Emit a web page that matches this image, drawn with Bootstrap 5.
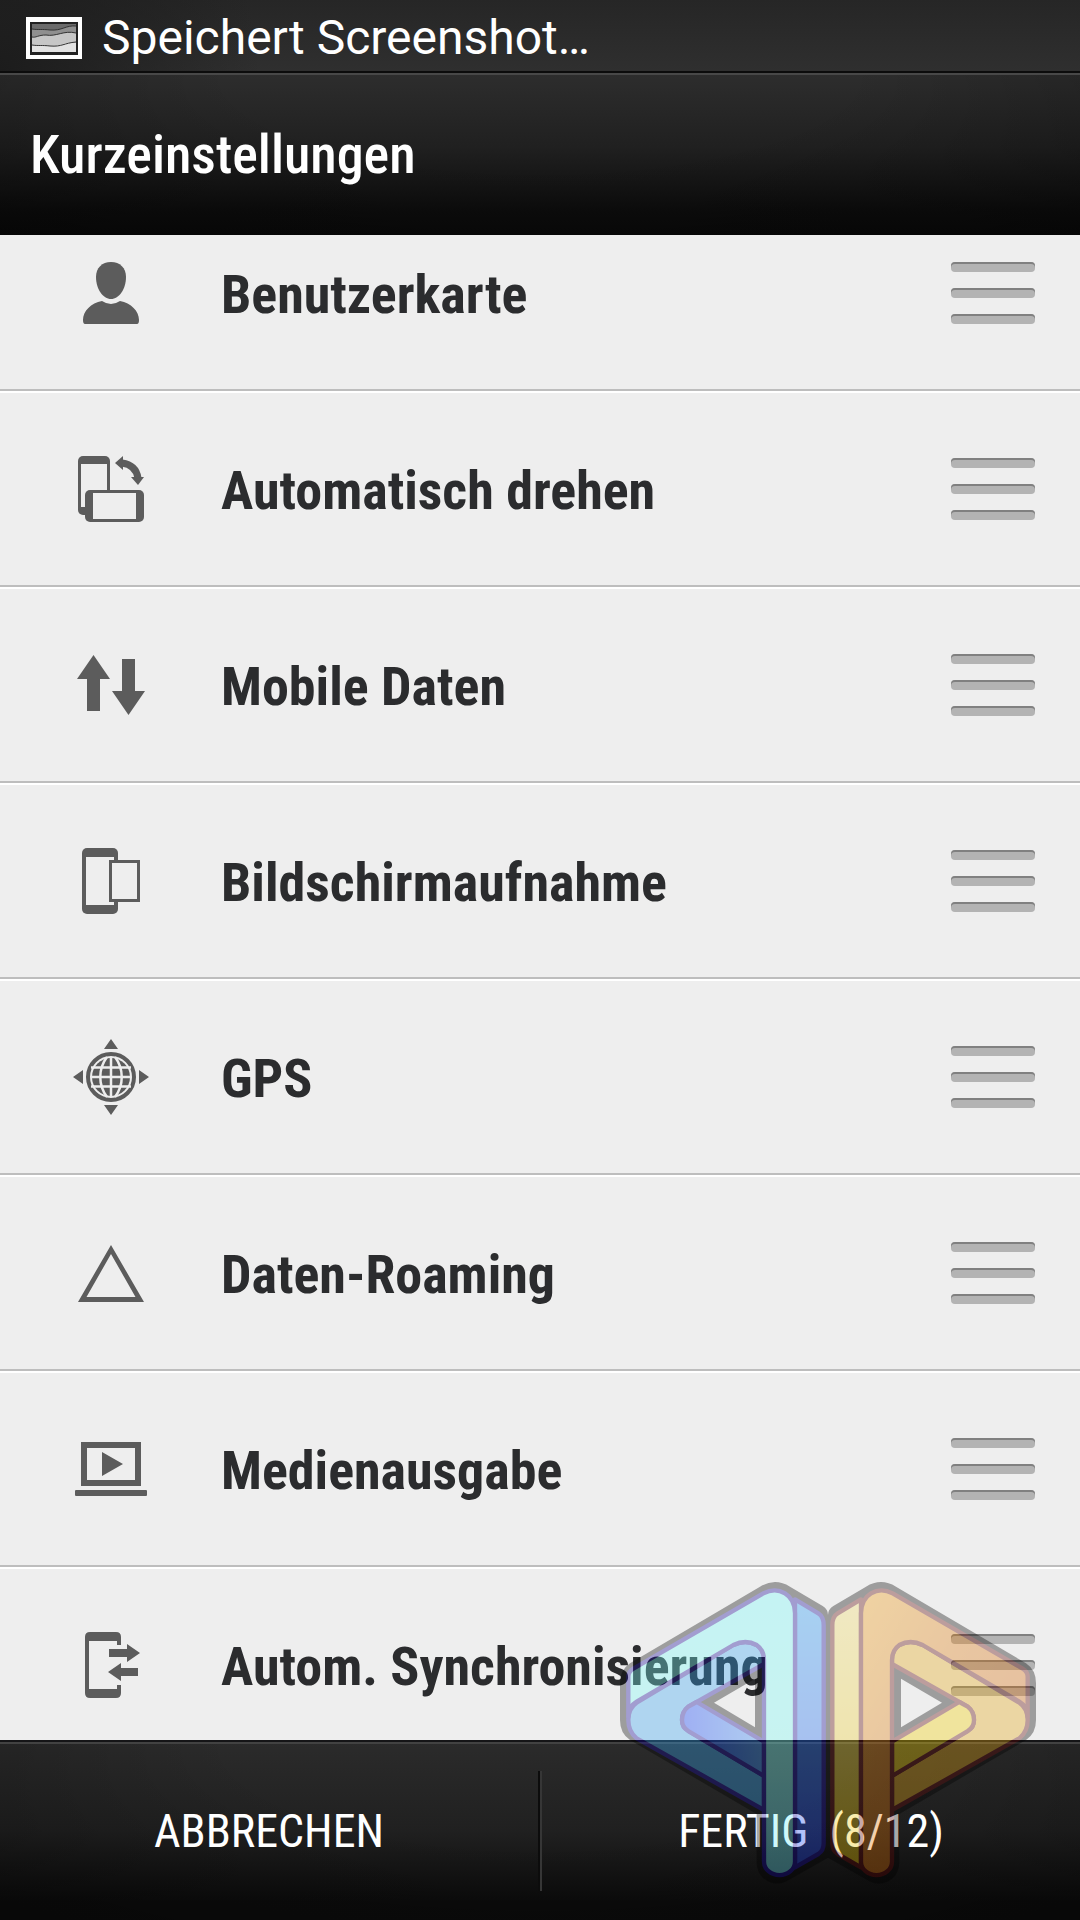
<!DOCTYPE html>
<html lang="de">
<head>
<meta charset="utf-8">
<meta name="viewport" content="width=device-width, initial-scale=1">
<title>Kurzeinstellungen</title>
<link href="https://cdn.jsdelivr.net/npm/bootstrap@5.3.0/dist/css/bootstrap.min.css" rel="stylesheet">
<style>
  body { font-family: "Roboto Condensed", "Liberation Sans Narrow", Roboto, sans-serif; background: #eee; color: #2b2c2e; }
  .status-bar { height: 73px; padding: 5px 26px 0; gap: 20px; border-bottom: 2px solid #0c0c0c; font: 48px/60px Roboto, sans-serif; background: radial-gradient(circle at 0 100%, #1c1c1c, transparent 260px), linear-gradient(#262626, #2f2f2f); }
  .title-bar { height: 162px; padding: 0 30px; border-top: 2px solid #484848; background: radial-gradient(ellipse at 50% 0, transparent 40%, rgba(0,0,0,.3)), linear-gradient(#2d2d2d, #202020 45%, #0c0c0c 85%, #090909); }
  .title-bar h1 { font-size: 54px; line-height: 72px; font-weight: 500; }
  .settings-list { margin-top: -38px; }
  .setting-row { height: 196px; padding: 0 45px 2px 71px; border-bottom: 2px solid #fff; box-shadow: inset 0 -2px #bdbdbd; }
  .setting-icon { width: 80px; height: 80px; margin-right: 70px; fill: #5c5c5c; flex: none; }
  .setting-name { padding-top: 4px; font-size: 54px; line-height: 72px; font-weight: 700; }
  .grip { width: 84px; gap: 16px; }
  .grip span { height: 10px; border-radius: 4px; background: #b3b3b3; box-shadow: inset 0 2px #808080; }
  .action-bar { height: 180px; border-top: 2px solid #151517; box-shadow: inset 0 2px #424242; background: radial-gradient(ellipse at 50% 0, transparent 40%, rgba(0,0,0,.3)), linear-gradient(#2b2b2b, #202020 50%, #0b0b0b 90%); }
  .action-bar button { font-size: 46px; line-height: 60px; }
  .divider { width: 4px; height: 120px; border-left: 2px solid #0c0c0c; border-right: 2px solid #363636; }
  .watermark { width: 480px; height: 360px; pointer-events: none; }
</style>
<script src="https://cdn.jsdelivr.net/npm/bootstrap@5.3.0/dist/js/bootstrap.bundle.min.js"></script>
</head>
<body>
<div class="vh-100 d-flex flex-column position-relative overflow-hidden">
  <div class="status-bar d-flex align-items-center text-white flex-shrink-0">
    <svg width="56" height="42" viewBox="0 0 56 42" aria-hidden="true">
      <path d="M0 0H56V42H0Z" fill="#fff"/><path d="M4 5H52V38H4Z" fill="#222"/>
      <path d="M6 7H50V35H6Z" fill="#e2e2e2"/>
      <path d="M6 7H50V26C38 24 36 30 24 29C16 28 12 29 6 28Z" fill="#c6c6c6"/>
      <path d="M6 7H50V16C38 13 30 20 20 18C12 18 10 21 6 20Z" fill="#8f8f8f"/>
      <path d="M6 7H50V9C40 8 36 14 24 13C16 12 12 13 6 12Z" fill="#6b6b6b"/>
      <path d="M6 12C12 13 16 12 24 13C36 14 40 8 50 9M6 20C10 21 12 18 20 18C30 20 38 13 50 16M6 28C12 29 16 28 24 29C36 30 38 26 50 25" fill="none" stroke="#333"/>
    </svg>
    <span>Speichert Screenshot…</span>
  </div>
  <header class="title-bar d-flex align-items-center text-white flex-shrink-0">
    <h1 class="m-0">Kurzeinstellungen</h1>
  </header>

  <main class="flex-grow-1 overflow-hidden" style="min-height:0">
    <ul class="settings-list list-unstyled mb-0">
      <li class="setting-row d-flex align-items-center">
        <svg class="setting-icon" viewBox="0 0 80 80" aria-hidden="true"><path d="M40 9C49 9 55 15 55 24C55 36 48 46 40 46S25 36 25 24C25 15 31 9 40 9Z"/><path d="M31 48Q40 54 49 48C60 50 68 58 68 67Q68 71 66 71H14Q12 71 12 67C12 58 20 50 31 48Z"/></svg>
        <span class="setting-name flex-grow-1">Benutzerkarte</span>
        <button type="button" class="grip btn p-0 border-0 d-flex flex-column" aria-label="Benutzerkarte verschieben"><span class="w-100"></span><span class="w-100"></span><span class="w-100"></span></button>
      </li>
      <li class="setting-row d-flex align-items-center">
        <svg class="setting-icon" viewBox="0 0 80 80" aria-hidden="true"><rect x="7" y="7" width="32" height="59" rx="5"/><path d="M10 15H36V58H10Z" fill="#eee"/><rect x="14" y="41" width="59" height="32" rx="5"/><path d="M22 44H65V70H22Z" fill="#eee"/><path d="M44 14L52 7V21ZM60 28H73L67 36Z"/><path d="M51 14Q65 16 67 29" fill="none" stroke="#5c5c5c" stroke-width="7"/></svg>
        <span class="setting-name flex-grow-1">Automatisch drehen</span>
        <button type="button" class="grip btn p-0 border-0 d-flex flex-column" aria-label="Automatisch drehen verschieben"><span class="w-100"></span><span class="w-100"></span><span class="w-100"></span></button>
      </li>
      <li class="setting-row d-flex align-items-center">
        <svg class="setting-icon" viewBox="0 0 80 80" aria-hidden="true"><path d="M22.500 10L39 34H29V66H16V34H6ZM51 14H64V46H74L57.500 70L41 46H51Z"/></svg>
        <span class="setting-name flex-grow-1">Mobile Daten</span>
        <button type="button" class="grip btn p-0 border-0 d-flex flex-column" aria-label="Mobile Daten verschieben"><span class="w-100"></span><span class="w-100"></span><span class="w-100"></span></button>
      </li>
      <li class="setting-row d-flex align-items-center">
        <svg class="setting-icon" viewBox="0 0 80 80" aria-hidden="true"><rect x="11" y="7" width="36" height="66" rx="5"/><path d="M15 16H43V64H15Z" fill="#eee"/><path d="M38 19H69V61H38Z"/><path d="M41 22H66V58H41Z" fill="#eee"/></svg>
        <span class="setting-name flex-grow-1">Bildschirmaufnahme</span>
        <button type="button" class="grip btn p-0 border-0 d-flex flex-column" aria-label="Bildschirmaufnahme verschieben"><span class="w-100"></span><span class="w-100"></span><span class="w-100"></span></button>
      </li>
      <li class="setting-row d-flex align-items-center">
        <svg class="setting-icon" viewBox="0 0 80 80" aria-hidden="true"><path d="M40 2L47 12H33ZM40 78L47 68H33ZM2 40L12 33V47ZM78 40L68 33V47Z"/><circle cx="40" cy="40" r="23" fill="none" stroke="#5c5c5c" stroke-width="4"/><circle cx="40" cy="40" r="19"/><path d="M40 20V60M20 40H60M20 30.500H60M20 49.500H60M36 20C27 32 27 48 36 60M44 20C53 32 53 48 44 60" fill="none" stroke="#eee" stroke-width="2.500"/></svg>
        <span class="setting-name flex-grow-1">GPS</span>
        <button type="button" class="grip btn p-0 border-0 d-flex flex-column" aria-label="GPS verschieben"><span class="w-100"></span><span class="w-100"></span><span class="w-100"></span></button>
      </li>
      <li class="setting-row d-flex align-items-center">
        <svg class="setting-icon" viewBox="0 0 80 80" aria-hidden="true"><path fill-rule="evenodd" d="M40 12L73 69H7ZM40 21L15.500 64H64.500Z"/></svg>
        <span class="setting-name flex-grow-1">Daten-Roaming</span>
        <button type="button" class="grip btn p-0 border-0 d-flex flex-column" aria-label="Daten-Roaming verschieben"><span class="w-100"></span><span class="w-100"></span><span class="w-100"></span></button>
      </li>
      <li class="setting-row d-flex align-items-center">
        <svg class="setting-icon" viewBox="0 0 80 80" aria-hidden="true"><path fill-rule="evenodd" d="M10 13H70V57H10ZM16 19V51H64V19ZM31 23L52 35L31 47Z"/><rect x="4" y="61" width="72" height="6" rx="1"/></svg>
        <span class="setting-name flex-grow-1">Medienausgabe</span>
        <button type="button" class="grip btn p-0 border-0 d-flex flex-column" aria-label="Medienausgabe verschieben"><span class="w-100"></span><span class="w-100"></span><span class="w-100"></span></button>
      </li>
      <li class="setting-row d-flex align-items-center">
        <svg class="setting-icon" viewBox="0 0 80 80" aria-hidden="true"><path d="M19 7H45Q50 7 50 12V20H46V16H18V64H46V60H50V68Q50 73 45 73H19Q14 73 14 68V12Q14 7 19 7ZM38 24H56V19L69 28L56 37V32H38ZM67 43H50V38L37 47L50 56V51H67Z"/></svg>
        <span class="setting-name flex-grow-1">Autom. Synchronisierung</span>
        <button type="button" class="grip btn p-0 border-0 d-flex flex-column" aria-label="Autom. Synchronisierung verschieben"><span class="w-100"></span><span class="w-100"></span><span class="w-100"></span></button>
      </li>
    </ul>
  </main>

  <footer class="action-bar d-flex align-items-center flex-shrink-0">
    <button type="button" class="btn border-0 text-white rounded-0 flex-fill w-50">ABBRECHEN</button>
    <div class="divider flex-shrink-0"></div>
    <button type="button" class="btn border-0 text-white rounded-0 flex-fill w-50">FERTIG&nbsp; (8/12)</button>
  </footer>

  <svg class="watermark position-absolute bottom-0 end-0" viewBox="0 0 1440 1080" aria-hidden="true">
    <defs>
      <linearGradient id="cyan" x1="0" y1="0" x2="0" y2="1"><stop offset="0" stop-color="#77ffff"/><stop offset=".6" stop-color="#80fff8"/><stop offset="1" stop-color="#68e0f0"/></linearGradient>
      <linearGradient id="blue" x1="0" y1="0" x2="0" y2="1"><stop offset="0" stop-color="#1e9bfa"/><stop offset="1" stop-color="#1e40f0"/></linearGradient>
      <linearGradient id="indigo"><stop offset="0" stop-color="#0636ff"/><stop offset="1" stop-color="#3590f4"/></linearGradient>
      <linearGradient id="orange" x1="1" y1="0" x2="0" y2="1"><stop offset="0" stop-color="#f4a010"/><stop offset=".4" stop-color="#e07a0c"/><stop offset="1" stop-color="#d05808"/></linearGradient>
      <linearGradient id="yellow" x1="0" y1="0" x2="0" y2="1"><stop offset="0" stop-color="#f4e070"/><stop offset="1" stop-color="#f0c800"/></linearGradient>
      <path id="shadow" fill-rule="evenodd" d="M480 80Q525 52 570 80L668 138Q684 148 684 165V893L570 958Q530 985 490 955Q470 935 470 905V762L90 540Q60 520 60 480V370Q60 330 90 310ZM342 428L465 502V356Z"/>
      <path id="front" d="M85 470V350Q85 335 100 326L490 100Q525 82 555 100Q585 118 585 160V905A46 40 0 0 1 492 905V300Q492 270 470 255Q437 237 400 255L110 425Q85 440 85 470Z"/>
      <path id="band" d="M85 480Q85 445 110 428L400 255Q437 237 470 255Q492 270 492 300V312L265 440Q246 455 246 480Q246 502 265 513L492 648V750L110 535Q85 515 85 480Z"/>
      <path id="fold" d="M246 480Q246 455 265 440L290 426L492 545V648L265 513Q246 502 246 480Z"/>
      <path id="side" d="M585 118L655 160Q671 170 671 195V850Q671 872 655 882L585 922Z"/>
    </defs>
    <g opacity=".336" stroke-width="13" stroke-linejoin="round">
      <use href="#shadow"/>
      <g stroke="#0f0098">
        <use href="#band" fill="#35a7f4"/><use href="#fold" fill="url(#indigo)"/><use href="#side" fill="url(#blue)"/><use href="#front" fill="url(#cyan)"/>
      </g>
      <g transform="translate(1368 0) scale(-1 1)">
        <use href="#shadow"/>
        <g stroke="#5c0000">
          <use href="#band" fill="#e8a814"/><use href="#fold" fill="#f4d100"/><use href="#side" fill="url(#yellow)"/><use href="#front" fill="url(#orange)"/>
        </g>
      </g>
    </g>
  </svg>
</div>
</body>
</html>
